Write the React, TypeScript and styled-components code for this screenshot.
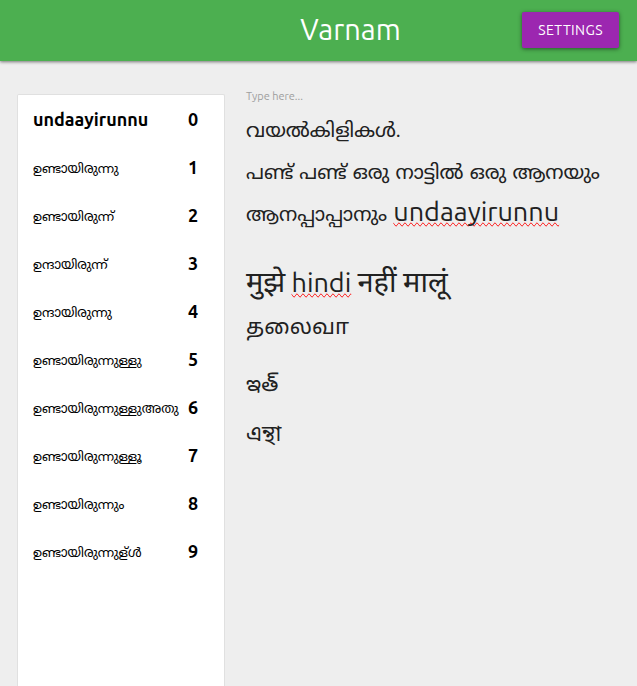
import React from "react";
import styled, { createGlobalStyle } from "styled-components";

const GlobalStyle = createGlobalStyle`
  *, *::before, *::after { box-sizing: border-box; }
  body {
    margin: 0;
    background: #eeeeee;
    color: #212121;
    font-family: Ubuntu, "Noto Sans", "Noto Sans Malayalam", "Noto Sans Devanagari", "Noto Sans Tamil", "Noto Sans Telugu", "Noto Sans Bengali", sans-serif;
  }
`;

const Page = styled.div`
  min-height: 100vh;
  display: flex;
  flex-direction: column;
`;

const TopBar = styled.header`
  display: grid;
  grid-template-columns: 1fr auto 1fr;
  align-items: center;
  padding: 12px 18px 13px;
  background: #4caf50;
  box-shadow: 0 1px 3px rgba(0, 0, 0, 0.5);
`;

const Title = styled.h1`
  grid-column: 2;
  margin: 0;
  padding: 0 0 2px 64px;
  color: #ffffff;
  font-size: 29px;
  line-height: 32px;
  font-weight: 400;
`;

const SettingsButton = styled.button`
  justify-self: end;
  height: 36px;
  padding: 0 16px;
  border: 0;
  border-radius: 2px;
  background: #9c27b0;
  color: #ffffff;
  font: inherit;
  font-size: 14px;
  letter-spacing: 0.03em;
  text-transform: uppercase;
  box-shadow: 0 1px 4px rgba(0, 0, 0, 0.5);
  cursor: pointer;
`;

const Workspace = styled.main`
  flex: 1;
  display: grid;
  grid-template-columns: 208px 1fr;
  gap: 21px;
  padding: 33px 17px 0;
`;

const Panel = styled.ol`
  margin: 0;
  padding: 0;
  list-style: none;
  background: #ffffff;
  border: 1px solid #e0e0e0;
  border-bottom: 0;
  border-radius: 2px 2px 0 0;
`;

const Suggestion = styled.li`
  display: grid;
  grid-template-columns: 1fr 36px;
  align-items: center;
  height: 48px;
  padding-left: 15px;
  color: #000000;
  white-space: nowrap;
`;

const Word = styled.span<{ $typed: boolean }>`
  padding-top: ${(p) => (p.$typed ? 0 : 5)}px;
  font-size: ${(p) => (p.$typed ? 18 : 13)}px;
  font-weight: ${(p) => (p.$typed ? 600 : 400)};
`;

const Index = styled.span`
  font-size: 18px;
  font-weight: 600;
`;

const Editor = styled.section`
  display: flex;
  flex-direction: column;
  min-width: 0;
`;

const Hint = styled.span`
  color: #9e9e9e;
  font-size: 11px;
  line-height: 12px;
  margin-top: -4px;
  margin-bottom: 4px;
`;

const Sheet = styled.div`
  font-size: 27px;
  line-height: 42px;
  outline: 0;
`;

const scriptSize = { ml: 20, hi: 29, ta: 22, te: 22, bn: 22 };

const Line = styled.p<{ $gap?: number }>`
  margin: ${(p) => p.$gap ?? 0}px 0 0;
`;

const Script = styled.span<{ lang: keyof typeof scriptSize }>`
  font-size: ${(p) => scriptSize[p.lang]}px;
  line-height: 1;
`;

const Misspelled = styled.span`
  text-decoration: spelling-error;
`;

const suggestions = [
  "undaayirunnu",
  "ഉണ്ടായിരുന്നു",
  "ഉണ്ടായിരുന്ന്",
  "ഉന്ദായിരുന്ന്",
  "ഉന്ദായിരുന്നു",
  "ഉണ്ടായിരുന്നുള്ളു",
  "ഉണ്ടായിരുന്നുള്ളുഅതു",
  "ഉണ്ടായിരുന്നുള്ളൂ",
  "ഉണ്ടായിരുന്നും",
  "ഉണ്ടായിരുന്നുള്ൾ",
];

const secondLine = ["പണ്ട്", "പണ്ട്", "ഒരു", "നാട്ടിൽ", "ഒരു", "ആനയും"];

export default function App() {
  return (
    <Page>
      <GlobalStyle />
      <TopBar>
        <Title>Varnam</Title>
        <SettingsButton type="button">Settings</SettingsButton>
      </TopBar>
      <Workspace>
        <Panel>
          {suggestions.map((word, i) => (
            <Suggestion key={word}>
              <Word $typed={i === 0}>{word}</Word>
              <Index>{i}</Index>
            </Suggestion>
          ))}
        </Panel>
        <Editor>
          <Hint id="editor-label">Type here...</Hint>
          <Sheet
            role="textbox"
            aria-multiline="true"
            aria-labelledby="editor-label"
            contentEditable
            suppressContentEditableWarning
            spellCheck={false}
          >
            <Line><Script lang="ml">വയൽകിളികൾ.</Script></Line>
            <Line>
              {secondLine.map((word, i) => (
                <React.Fragment key={i}>
                  {i > 0 && " "}
                  <Script lang="ml">{word}</Script>
                </React.Fragment>
              ))}
            </Line>
            <Line>
              <Script lang="ml">ആനപ്പാപ്പാനും</Script> <Misspelled>undaayirunnu</Misspelled>
            </Line>
            <Line $gap={29}>
              <Script lang="hi">मुझे</Script> <Misspelled>hindi</Misspelled>{" "}
              <Script lang="hi">नहीं मालूं</Script>
            </Line>
            <Line><Script lang="ta">தலைவா</Script></Line>
            <Line $gap={15}><Script lang="te">ఇత్</Script></Line>
            <Line $gap={8}><Script lang="bn">এন্থা</Script></Line>
          </Sheet>
        </Editor>
      </Workspace>
    </Page>
  );
}
